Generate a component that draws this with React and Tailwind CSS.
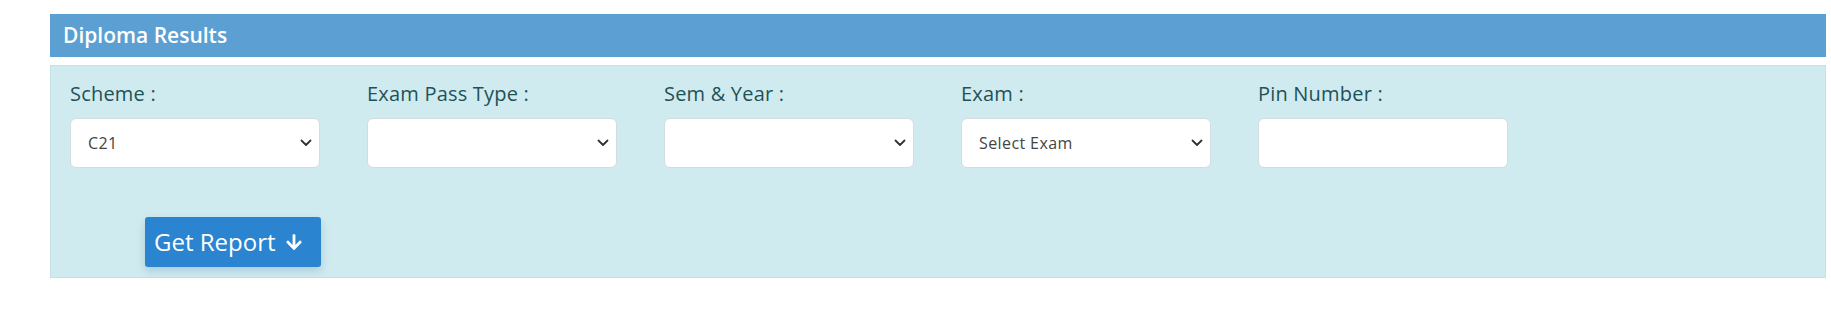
import React from 'react';
import { FaArrowDown } from 'react-icons/fa';

const FIELDS = [
  { label: 'Scheme :', type: 'select', value: 'C21' },
  { label: 'Exam Pass Type :', type: 'select', value: '' },
  { label: 'Sem & Year :', type: 'select', value: '' },
  { label: 'Exam :', type: 'select', value: 'Select Exam' },
  { label: 'Pin Number :', type: 'input', value: '' },
];

const Chevron = () => (
  <svg width="12" height="8" viewBox="0 0 12 8" className="absolute right-[8px] top-1/2 -translate-y-1/2 pointer-events-none">
    <path d="M1.5 1.5 L6 6 L10.5 1.5" fill="none" stroke="#333" strokeWidth="1.8" strokeLinecap="round" strokeLinejoin="round" />
  </svg>
);

export default function App() {
  const box = 'w-full h-[50px] rounded-[6px] border border-[#d3dcdf] bg-white outline-none text-[16px] tracking-[0.4px] text-[#444] px-[17px]';

  return (
    <div className="h-[330px] bg-white pt-[14px] pl-[50px] pr-[5px] font-['Open_Sans','Noto_Sans',sans-serif]">
      {/* Header */}
      <div className="h-[43px] bg-[#5c9fd3] flex items-center px-[13px]">
        <h2 className="text-white text-[21px] font-semibold leading-none">Diploma Results</h2>
      </div>

      {/* Body */}
      <div className="mt-[8px] h-[213px] border border-[#c4e1e7] bg-[#d0ebf0] px-[19px] pt-[16px]">
        <div className="flex gap-[47px]">
          {FIELDS.map(f => (
            <div key={f.label} className="w-[250px]">
              <label className="block text-[20px] leading-[24px] tracking-[0.2px] text-[#1f5257] mb-[12px]">{f.label}</label>
              {f.type === 'select' ? (
                <div className="relative">
                  <select className={`${box} appearance-none`} defaultValue={f.value}>
                    <option value={f.value}>{f.value}</option>
                  </select>
                  <Chevron />
                </div>
              ) : (
                <input className={box} defaultValue={f.value} />
              )}
            </div>
          ))}
        </div>

        <button className="mt-[49px] ml-[75px] h-[50px] w-[176px] rounded-[3px] bg-[#2a84d0] text-white text-[24px] flex items-center pl-[9px] gap-[9px] shadow-[0_4px_10px_rgba(0,60,120,0.18)]">
          <span className="leading-none">Get Report</span>
          <FaArrowDown size={18} />
        </button>
      </div>
    </div>
  );
}
